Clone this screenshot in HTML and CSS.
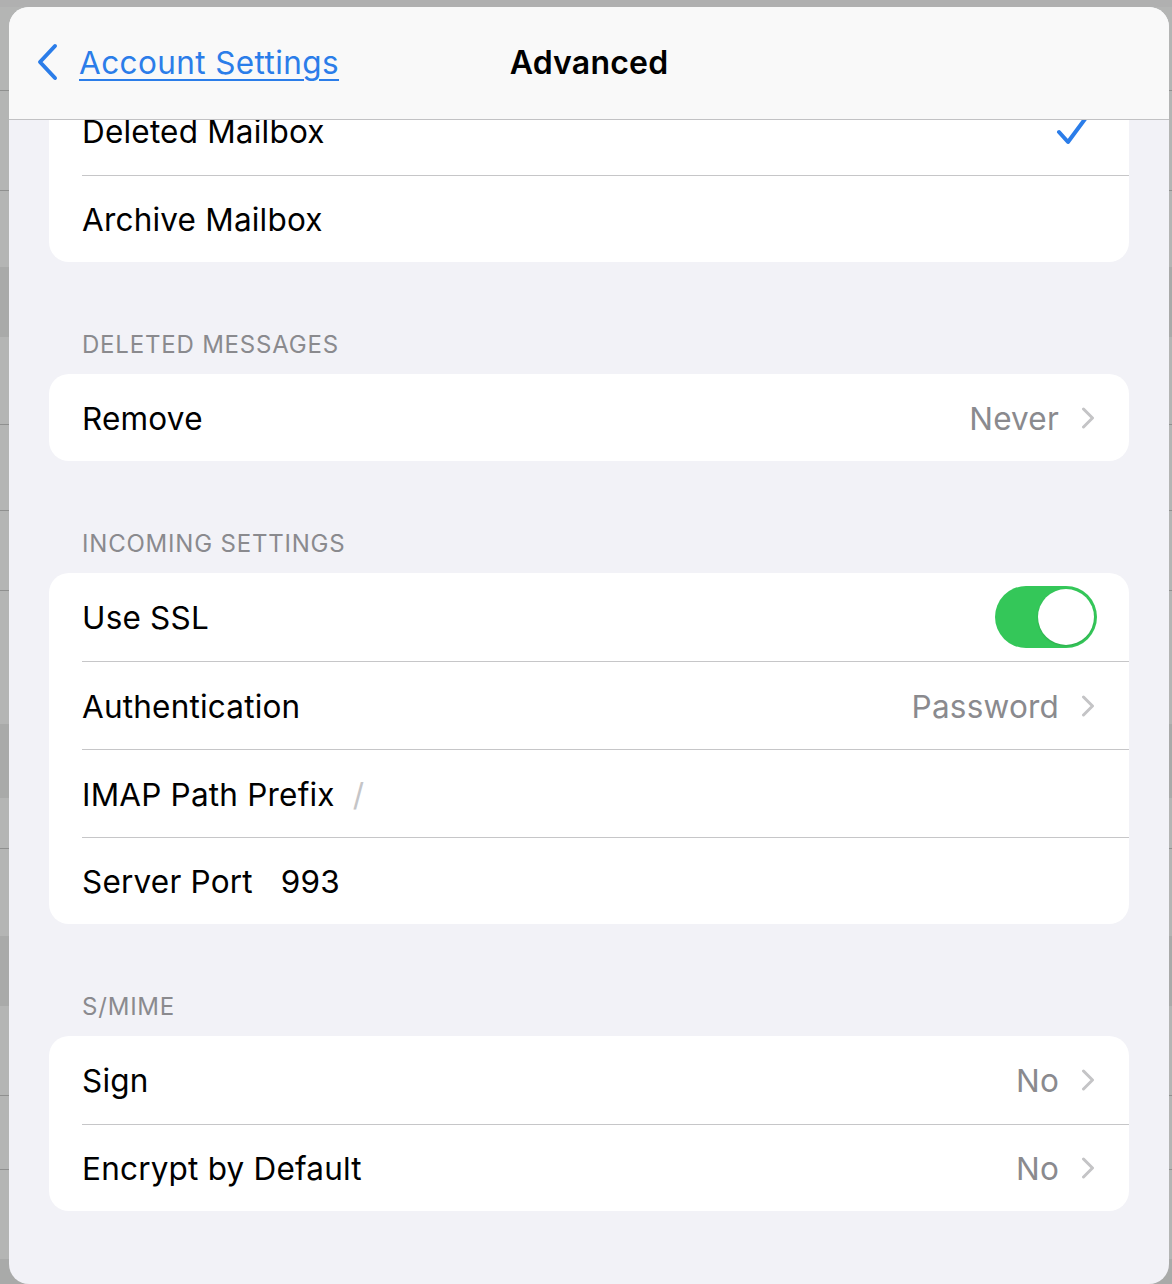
FILE: index.html
```html
<!DOCTYPE html>
<html>
<head>
<meta charset="utf-8">
<title>Advanced</title>
<link rel="stylesheet" href="styles.css">
</head>
<body>
<div class="sheet">
  <header class="navbar">
    <a class="back">
      <svg class="back-chevron" width="22" height="38" viewBox="0 0 22 38"><path d="M19 3 L4 19 L19 35" fill="none" stroke="#2b7de9" stroke-width="4" stroke-linecap="round" stroke-linejoin="round"/></svg>
      <span class="back-label">Account Settings</span>
    </a>
    <h1 class="title">Advanced</h1>
    <div class="nav-spacer"></div>
  </header>
  <main class="content">
    <section class="card card-first">
      <div class="row"><div class="row-inner">
        <span class="label">Deleted Mailbox</span>
        <svg class="check" width="32" height="30" viewBox="0 0 32 30"><path d="M3 16 L12 26 L29 3" fill="none" stroke="#2b7de9" stroke-width="4" stroke-linecap="round" stroke-linejoin="round"/></svg>
      </div></div>
      <div class="row"><div class="row-inner">
        <span class="label">Archive Mailbox</span>
      </div></div>
    </section>

    <h2 class="section-title">DELETED MESSAGES</h2>
    <section class="card">
      <div class="row"><div class="row-inner">
        <span class="label">Remove</span>
        <span class="value">Never</span>
        <svg class="chevron" width="14" height="22" viewBox="0 0 14 22"><path d="M2.5 2 L11.5 11 L2.5 20" fill="none" stroke="#c4c4c6" stroke-width="3" stroke-linecap="round" stroke-linejoin="round"/></svg>
      </div></div>
    </section>

    <h2 class="section-title">INCOMING SETTINGS</h2>
    <section class="card">
      <div class="row"><div class="row-inner">
        <span class="label">Use SSL</span>
        <span class="toggle"><span class="thumb"></span></span>
      </div></div>
      <div class="row"><div class="row-inner">
        <span class="label">Authentication</span>
        <span class="value">Password</span>
        <svg class="chevron" width="14" height="22" viewBox="0 0 14 22"><path d="M2.5 2 L11.5 11 L2.5 20" fill="none" stroke="#c4c4c6" stroke-width="3" stroke-linecap="round" stroke-linejoin="round"/></svg>
      </div></div>
      <div class="row"><div class="row-inner">
        <span class="label">IMAP Path Prefix</span>
        <span class="field placeholder">/</span>
      </div></div>
      <div class="row"><div class="row-inner">
        <span class="label">Server Port</span>
        <span class="field">993</span>
      </div></div>
    </section>

    <h2 class="section-title">S/MIME</h2>
    <section class="card">
      <div class="row"><div class="row-inner">
        <span class="label">Sign</span>
        <span class="value">No</span>
        <svg class="chevron" width="14" height="22" viewBox="0 0 14 22"><path d="M2.5 2 L11.5 11 L2.5 20" fill="none" stroke="#c4c4c6" stroke-width="3" stroke-linecap="round" stroke-linejoin="round"/></svg>
      </div></div>
      <div class="row"><div class="row-inner">
        <span class="label">Encrypt by Default</span>
        <span class="value">No</span>
        <svg class="chevron" width="14" height="22" viewBox="0 0 14 22"><path d="M2.5 2 L11.5 11 L2.5 20" fill="none" stroke="#c4c4c6" stroke-width="3" stroke-linecap="round" stroke-linejoin="round"/></svg>
      </div></div>
    </section>
  </main>
</div>
</body>
</html>
```

FILE: styles.css
```css
* { box-sizing: border-box; }

html, body {
  margin: 0;
  padding: 0;
  width: 1172px;
  height: 1284px;
  overflow: hidden;
}

body {
  font-family: Inter, "Noto Sans", "Liberation Sans", sans-serif;
  background-color: #b4b5b4;
  background-image:
    linear-gradient(to bottom, #b0b0b0 0, #b0b0b0 7px, transparent 7px),
    linear-gradient(to bottom,
      transparent 0, transparent 90px, #8f908f 90px, #8f908f 91px, transparent 91px,
      transparent 190px, #8f908f 190px, #8f908f 191px, transparent 191px,
      transparent 267px, #a9aaa9 267px, #a9aaa9 337px, transparent 337px,
      transparent 424px, #8f908f 424px, #8f908f 425px, transparent 425px,
      transparent 510px, #8f908f 510px, #8f908f 511px, transparent 511px,
      transparent 590px, #8f908f 590px, #8f908f 591px, transparent 591px,
      transparent 724px, #a9aaa9 724px, #a9aaa9 798px, transparent 798px,
      transparent 848px, #8f908f 848px, #8f908f 849px, transparent 849px,
      transparent 936px, #a9aaa9 936px, #a9aaa9 1006px, transparent 1006px,
      transparent 1095px, #8f908f 1095px, #8f908f 1096px, transparent 1096px,
      transparent 1169px, #8f908f 1169px, #8f908f 1170px, transparent 1170px,
      transparent 1259px, #a9aaa9 1259px, #a9aaa9 1284px);
  background-repeat: no-repeat;
}

.sheet {
  margin: 7px 0 0 9px;
  width: 1160px;
  height: 1277px;
  border-radius: 20px;
  background: #f2f2f7;
  overflow: hidden;
  display: flex;
  flex-direction: column;
}

.navbar {
  flex: 0 0 auto;
  height: 113px;
  background: #f9f9f9;
  border-bottom: 1px solid #c2c2c4;
  display: grid;
  grid-template-columns: 1fr auto 1fr;
  align-items: center;
  padding: 0 27px 2px 27px;
  position: relative;
  z-index: 2;
}

.back {
  display: flex;
  align-items: center;
  gap: 21px;
  color: #2b7de9;
  text-decoration: none;
}

.back-chevron { display: block; flex: 0 0 auto; }

.back-label {
  font-size: 31.5px;
  text-decoration: underline;
  text-decoration-thickness: 2px;
  text-underline-offset: 5px;
  letter-spacing: 0.4px;
}

.title {
  margin: 0;
  font-size: 32px;
  font-weight: 600;
  color: #000;
  letter-spacing: 0.2px;
}

.content {
  flex: 1 1 auto;
  overflow: hidden;
  padding: 0 40px;
}

.card {
  background: #fff;
  border-radius: 20px;
  overflow: hidden;
}

.card-first {
  margin-top: -33px;
}

.row {
  padding-left: 33px;
}

.row-inner {
  height: 88px;
  display: flex;
  align-items: center;
  padding-right: 34px;
  border-top: 1px solid #c6c6c8;
}

.row:first-child .row-inner {
  border-top: none;
}

.row:last-child .row-inner {
  height: 87px;
}

.label {
  font-size: 31.5px;
  color: #000;
  letter-spacing: 0.2px;
  padding-top: 1px;
}

.value {
  margin-left: auto;
  font-size: 31.5px;
  color: #8a8a8e;
  letter-spacing: 0.2px;
  padding-top: 1px;
}

.chevron {
  display: block;
  margin-left: 22px;
  flex: 0 0 auto;
}

.check {
  display: block;
  margin-left: auto;
  margin-right: 7px;
}

.field {
  font-size: 31.5px;
  color: #000;
  margin-left: 28px;
  letter-spacing: 0.2px;
  padding-top: 1px;
}

.field.placeholder {
  color: #c5c5c7;
  margin-left: 18px;
}

.toggle {
  margin-left: auto;
  margin-right: -2px;
  width: 102px;
  height: 62px;
  border-radius: 31px;
  background: #34c759;
  display: flex;
  align-items: center;
  justify-content: flex-end;
  padding: 3px;
}

.thumb {
  width: 56px;
  height: 56px;
  border-radius: 50%;
  background: #fff;
  box-shadow: 0 1px 2px rgba(0,0,0,0.15);
}

.section-title {
  margin: 70px 0 16px 0;
  padding-left: 33px;
  height: 26px;
  line-height: 26px;
  font-size: 24px;
  font-weight: 400;
  color: #8a8a8e;
  letter-spacing: 0.8px;
}
```
